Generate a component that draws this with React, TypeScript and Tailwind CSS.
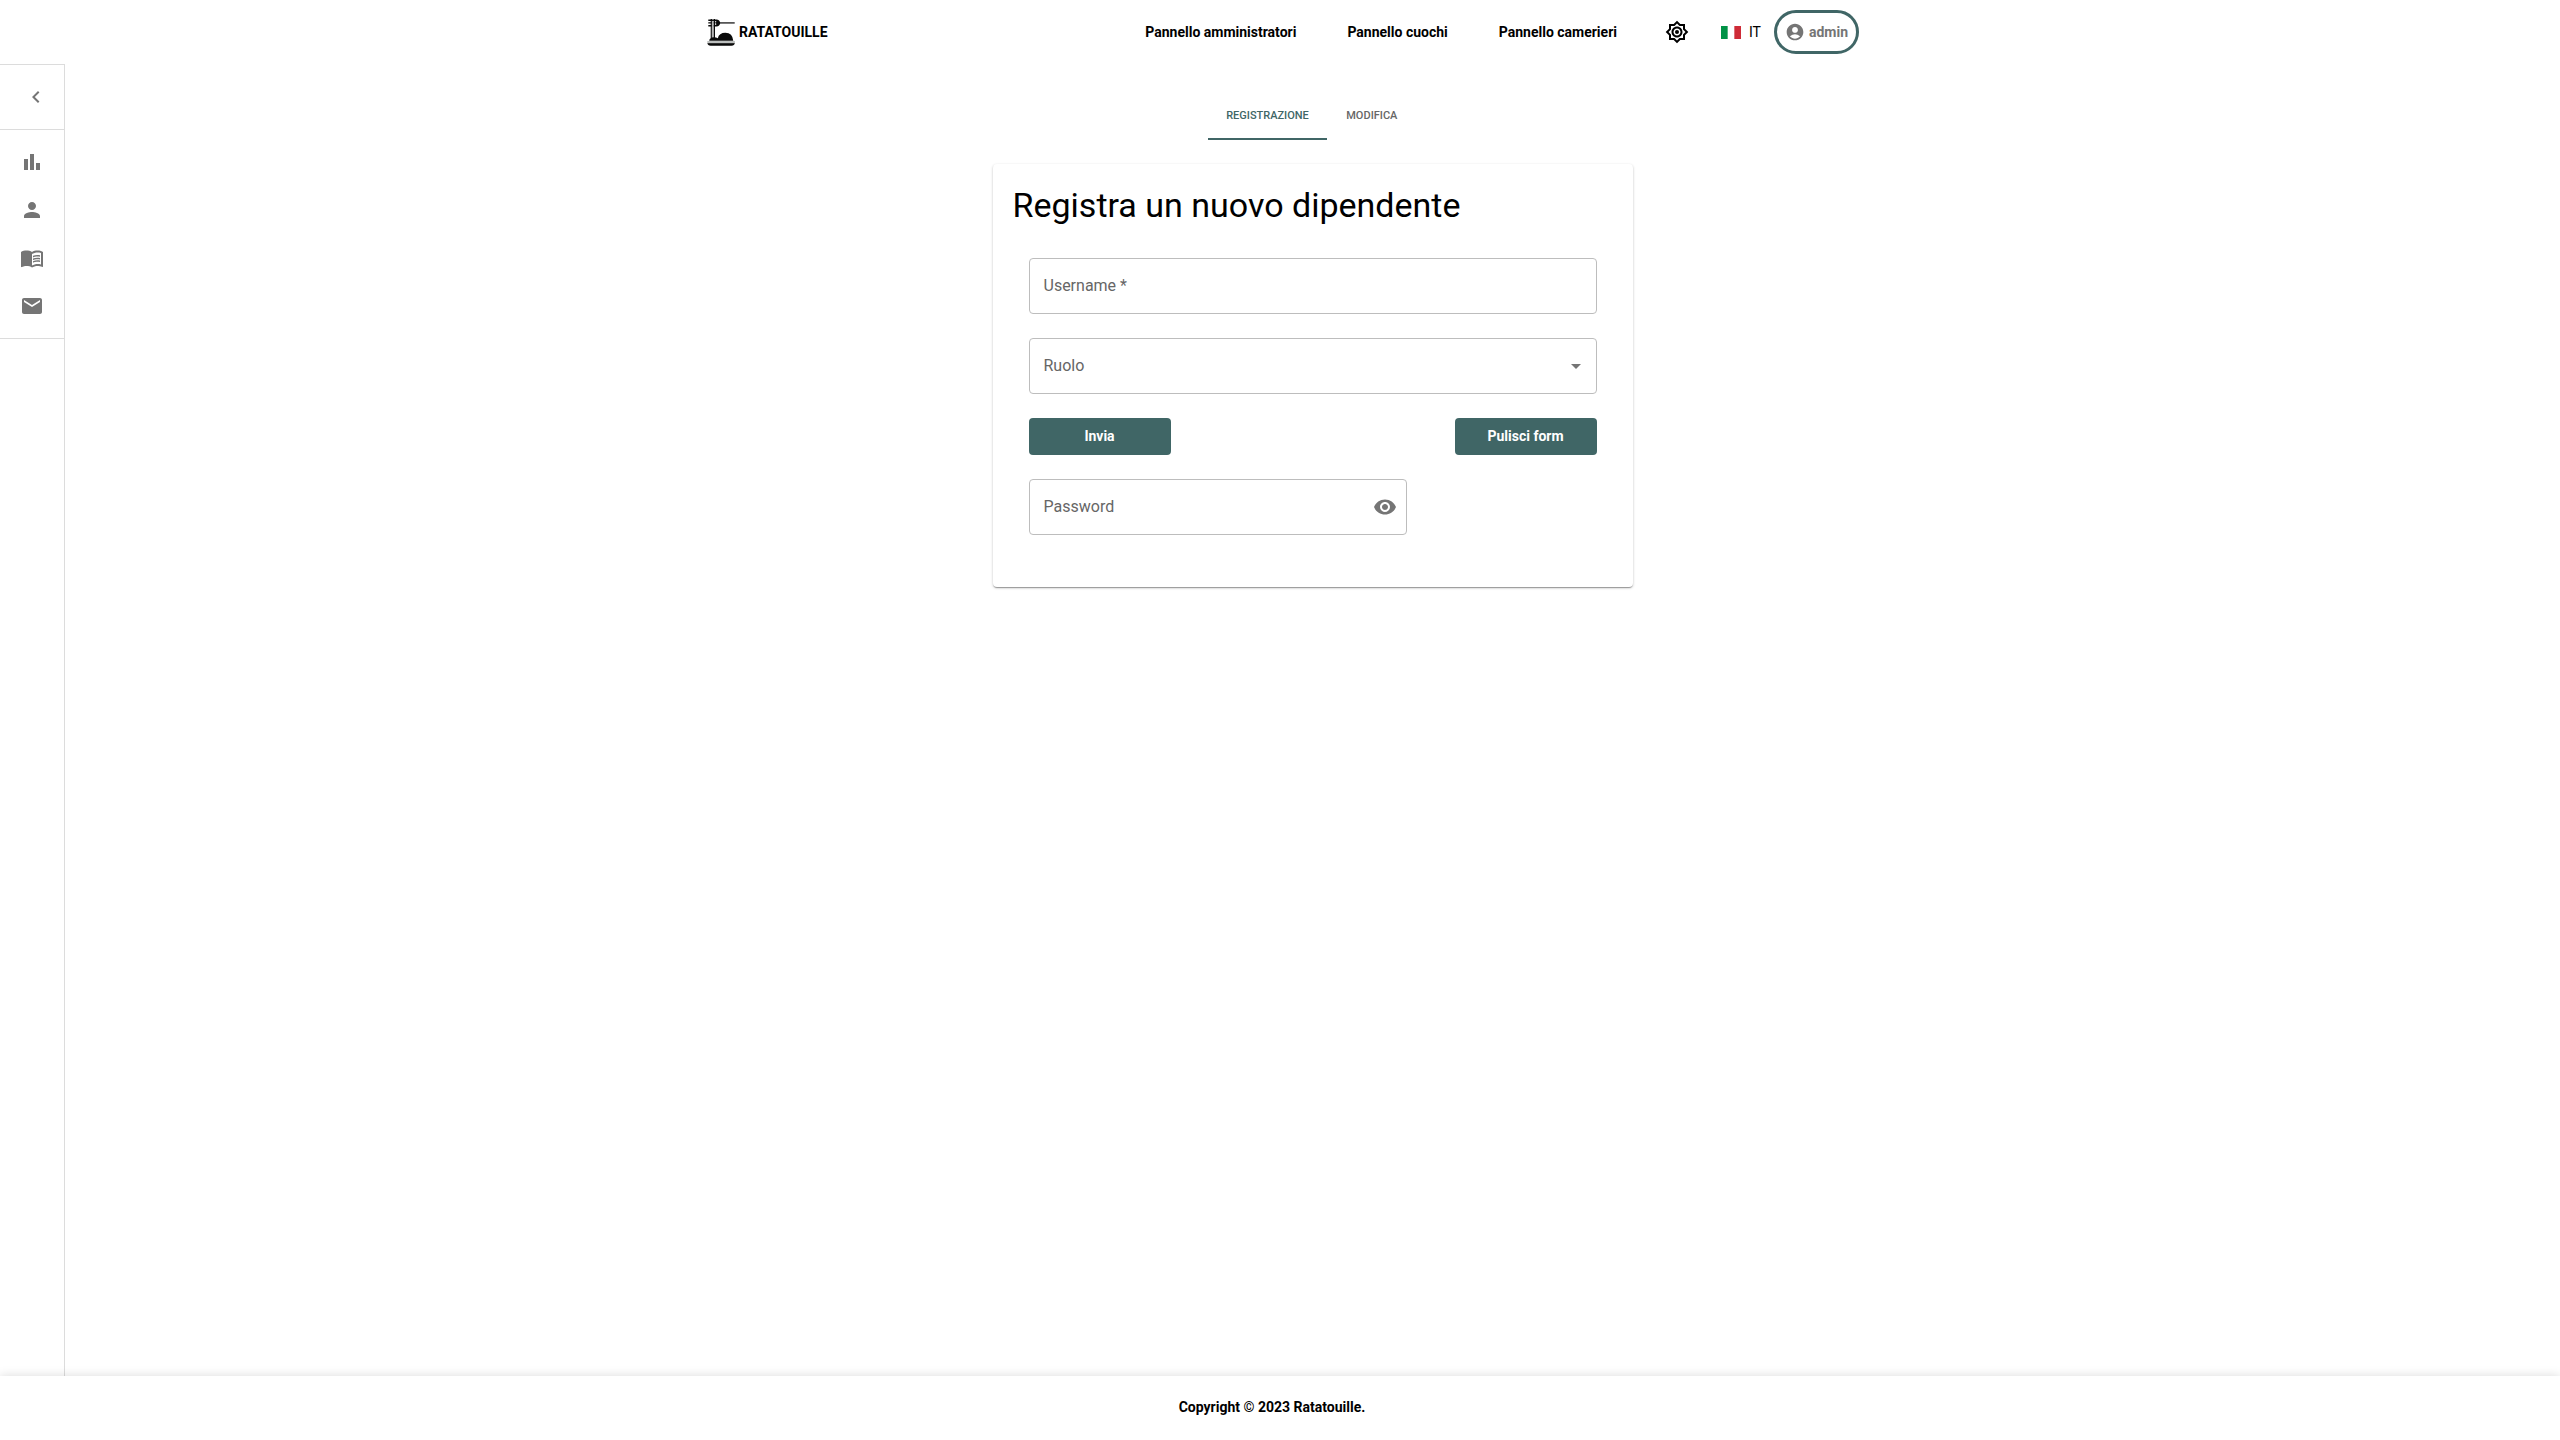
import { useState } from "react";
import type { ReactNode } from "react";
import {
  MdAccountCircle,
  MdArrowDropDown,
  MdBarChart,
  MdChevronLeft,
  MdMail,
  MdMenuBook,
  MdOutlineBrightness7,
  MdPerson,
  MdVisibility,
} from "react-icons/md";

const panels = ["Pannello amministratori", "Pannello cuochi", "Pannello camerieri"];

const shortcuts: { label: string; icon: ReactNode }[] = [
  { label: "Statistiche", icon: <MdBarChart size={24} /> },
  { label: "Dipendenti", icon: <MdPerson size={24} /> },
  { label: "Menu", icon: <MdMenuBook size={24} /> },
  { label: "Messaggi", icon: <MdMail size={24} /> },
];

function Logo() {
  return (
    <svg viewBox="0 0 28 28" className="size-7" aria-hidden="true">
      <g fill="#0a0a0a">
        <path d="M12 4.1H27.7V5.7H12z" fill="#444" />
        <path d="M1.3 1.6H9.5Q12.7 1.8 13.2 4.9Q12.7 8 9.5 8.4H1.3V7.1H9V5.6H1.3V4.2H9V2.9H1.3z" />
        <path d="M3.7 1H4.9V20H3.7z" />
        <path d="M4.9 2.9H6.8V20H4.9z" fill="#b5b5b5" />
        <path d="M6.8 1H8V20H6.8z" />
        <path d="M8 2.9H9.2V4.2H8zM8 5.6H9.2V7.1H8z" fill="#ccc" />
        <path d="M2.2 22.8Q2.6 19.4 6.8 19.2Q9.4 19.2 10.8 20.2Q12 14.7 18.4 14.7Q25.6 14.9 26.3 22.8z" />
        <path d="M.4 25H27.8Q27.4 27.7 24.6 27.7H3.6Q.8 27.7 .4 25z" />
        <path d="M.3 23H27.9V25.2H.3z" fill="#bcbfbe" />
      </g>
    </svg>
  );
}

function ItalianFlag() {
  return (
    <svg viewBox="0 0 20 13" className="h-[13px] w-5" aria-hidden="true">
      <path fill="#fff" d="M0 0H20V13H0z" />
      <path fill="#009246" d="M0 0H6.67V13H0z" />
      <path fill="#ce2b37" d="M13.33 0H20V13H13.33z" />
    </svg>
  );
}

function Header() {
  return (
    <header className="mx-auto flex h-16 w-full max-w-[1200px] items-center justify-between pl-[27px] pr-[21px]">
      <a href="#" className="flex items-center gap-1 text-sm font-bold">
        <Logo />
        RATATOUILLE
      </a>
      <div className="flex items-center">
        <nav className="flex items-center gap-[51px] text-sm font-bold">
          {panels.map((name) => (
            <a key={name} href="#">
              {name}
            </a>
          ))}
        </nav>
        <button type="button" aria-label="Cambia tema" className="ml-12">
          <MdOutlineBrightness7 size={24} />
        </button>
        <button type="button" className="ml-8 flex items-center gap-2 text-sm">
          <ItalianFlag />
          IT
        </button>
        <button
          type="button"
          className="ml-[13px] flex h-11 items-center gap-1 rounded-full border-[3px] border-[#406666] px-2 text-sm font-bold text-[#757575]"
        >
          <MdAccountCircle size={20} />
          admin
        </button>
      </div>
    </header>
  );
}

function Sidebar() {
  return (
    <aside className="w-[65px] shrink-0 border-r border-t border-[#dcdcdc] text-[#757575]">
      <div className="flex h-[65px] items-center justify-end border-b border-[#dcdcdc] pr-4">
        <button type="button" aria-label="Apri il menu laterale">
          <MdChevronLeft size={24} />
        </button>
      </div>
      <nav className="flex flex-col border-b border-[#dcdcdc] py-2">
        {shortcuts.map((item) => (
          <a key={item.label} href="#" aria-label={item.label} className="flex h-12 items-center justify-center">
            {item.icon}
          </a>
        ))}
      </nav>
    </aside>
  );
}

const fieldClass =
  "peer h-14 w-full appearance-none rounded border border-[#bdbdbd] bg-transparent px-[14px] text-base text-black outline-none focus:border-[#406666]";
const labelClass =
  "pointer-events-none absolute inset-y-0 left-[15px] flex items-center text-base text-[#666666] peer-focus:hidden";
const actionClass = "h-[37px] w-1/4 rounded bg-[#406666] pb-px text-sm font-bold text-white";

function EmployeeForm() {
  const [username, setUsername] = useState("");
  const [role, setRole] = useState("");
  const [password, setPassword] = useState("");
  const [visible, setVisible] = useState(false);

  const clear = () => {
    setUsername("");
    setRole("");
    setPassword("");
  };

  return (
    <section className="w-full max-w-[640px] rounded bg-white px-5 pb-[52px] pt-5 shadow-[0px_2px_1px_-1px_rgba(0,0,0,0.2),0px_1px_1px_0px_rgba(0,0,0,0.14),0px_1px_3px_0px_rgba(0,0,0,0.2)]">
      <h1 className="text-[34px] leading-[42px]">Registra un nuovo dipendente</h1>
      <form className="flex flex-col gap-6 px-4 pt-8" onSubmit={(event) => event.preventDefault()}>
        <div className="relative">
          <input
            id="username"
            className={fieldClass}
            value={username}
            onChange={(event) => setUsername(event.target.value)}
          />
          <label htmlFor="username" className={username ? "sr-only" : labelClass}>
            Username *
          </label>
        </div>
        <div className="relative">
          <select id="role" className={fieldClass} value={role} onChange={(event) => setRole(event.target.value)}>
            <option value="" />
            <option value="cook">Cuoco</option>
            <option value="waiter">Cameriere</option>
          </select>
          <label htmlFor="role" className={role ? "sr-only" : labelClass}>
            Ruolo
          </label>
          <MdArrowDropDown
            size={24}
            className="pointer-events-none absolute inset-y-0 right-[9px] my-auto text-[#757575]"
          />
        </div>
        <div className="flex justify-between">
          <button type="submit" className={actionClass}>
            Invia
          </button>
          <button type="button" onClick={clear} className={actionClass}>
            Pulisci form
          </button>
        </div>
        <div className="relative w-2/3">
          <input
            id="password"
            type={visible ? "text" : "password"}
            className={fieldClass}
            value={password}
            onChange={(event) => setPassword(event.target.value)}
          />
          <label htmlFor="password" className={password ? "sr-only" : labelClass}>
            Password
          </label>
          <button
            type="button"
            aria-label="Mostra password"
            onClick={() => setVisible(!visible)}
            className="absolute inset-y-0 right-[10px] text-[#757575]"
          >
            <MdVisibility size={24} />
          </button>
        </div>
      </form>
    </section>
  );
}

export default function App() {
  return (
    <div className="flex min-h-screen flex-col bg-white font-['Roboto',sans-serif] text-black">
      <Header />
      <div className="flex grow">
        <Sidebar />
        <main className="flex grow flex-col items-center pt-7">
          <div role="tablist" className="mb-6 flex h-12 text-[11px] font-medium">
            <button
              type="button"
              role="tab"
              aria-selected="true"
              className="border-b-2 border-[#406666] px-[18px] pt-[2px] text-[#406666]"
            >
              REGISTRAZIONE
            </button>
            <button type="button" role="tab" aria-selected="false" className="min-w-[90px] px-[18px] text-[#666666]">
              MODIFICA
            </button>
          </div>
          <EmployeeForm />
        </main>
      </div>
      <footer className="relative flex h-16 items-center justify-center bg-white pb-[2px] pr-4 text-sm font-bold shadow-[0_0_10px_rgba(0,0,0,0.15)]">
        Copyright © 2023 Ratatouille.
      </footer>
    </div>
  );
}
